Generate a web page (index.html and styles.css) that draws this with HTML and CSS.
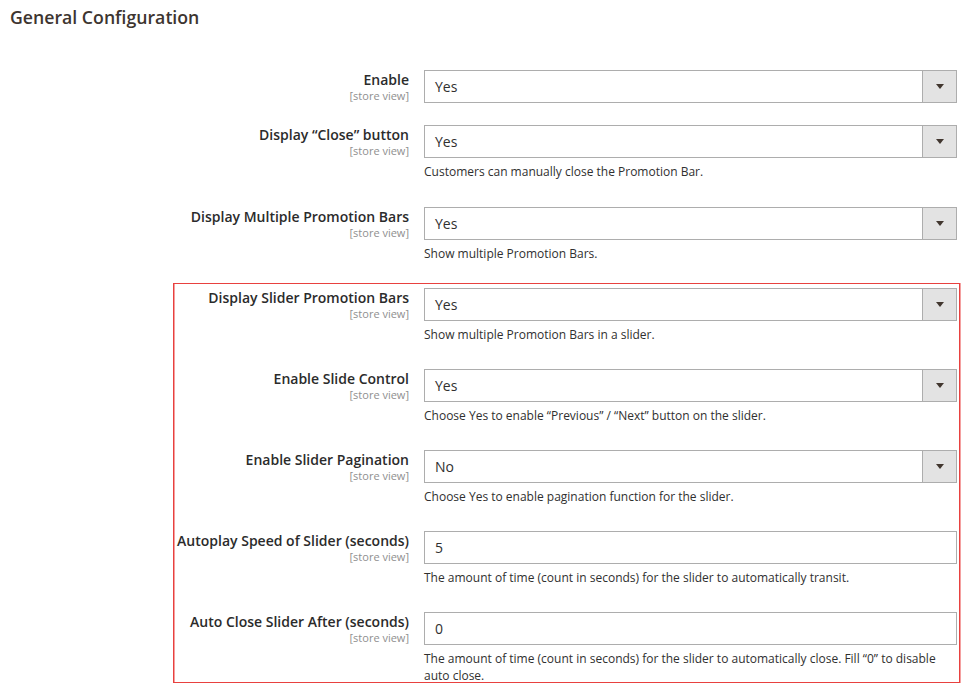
FILE: index.html
```html
<!DOCTYPE html>
<html lang="en">
<head>
<meta charset="utf-8">
<title>General Configuration</title>
<link rel="stylesheet" href="styles.css">
</head>
<body>
<div class="page">
  <h1 class="section-title">General Configuration</h1>

  <div class="fields">
    <div class="field">
      <div class="field-label"><span class="label-text">Enable</span><span class="scope">[store view]</span></div>
      <div class="field-control">
        <div class="select"><span class="select-value">Yes</span><span class="select-arrow"><i></i></span></div>
      </div>
    </div>

    <div class="field field-noted">
      <div class="field-label"><span class="label-text">Display “Close” button</span><span class="scope">[store view]</span></div>
      <div class="field-control">
        <div class="select"><span class="select-value">Yes</span><span class="select-arrow"><i></i></span></div>
        <p class="note">Customers can manually close the Promotion Bar.</p>
      </div>
    </div>

    <div class="field field-noted">
      <div class="field-label"><span class="label-text">Display Multiple Promotion Bars</span><span class="scope">[store view]</span></div>
      <div class="field-control">
        <div class="select"><span class="select-value">Yes</span><span class="select-arrow"><i></i></span></div>
        <p class="note">Show multiple Promotion Bars.</p>
      </div>
    </div>

    <div class="slider-group">
      <div class="field field-noted">
        <div class="field-label"><span class="label-text">Display Slider Promotion Bars</span><span class="scope">[store view]</span></div>
        <div class="field-control">
          <div class="select"><span class="select-value">Yes</span><span class="select-arrow"><i></i></span></div>
          <p class="note">Show multiple Promotion Bars in a slider.</p>
        </div>
      </div>

      <div class="field field-noted">
        <div class="field-label"><span class="label-text">Enable Slide Control</span><span class="scope">[store view]</span></div>
        <div class="field-control">
          <div class="select"><span class="select-value">Yes</span><span class="select-arrow"><i></i></span></div>
          <p class="note">Choose Yes to enable “Previous” / “Next” button on the slider.</p>
        </div>
      </div>

      <div class="field field-noted">
        <div class="field-label"><span class="label-text">Enable Slider Pagination</span><span class="scope">[store view]</span></div>
        <div class="field-control">
          <div class="select"><span class="select-value">No</span><span class="select-arrow"><i></i></span></div>
          <p class="note">Choose Yes to enable pagination function for the slider.</p>
        </div>
      </div>

      <div class="field field-noted">
        <div class="field-label"><span class="label-text">Autoplay Speed of Slider (seconds)</span><span class="scope">[store view]</span></div>
        <div class="field-control">
          <div class="text-input">5</div>
          <p class="note">The amount of time (count in seconds) for the slider to automatically transit.</p>
        </div>
      </div>

      <div class="field field-noted field-last">
        <div class="field-label"><span class="label-text">Auto Close Slider After (seconds)</span><span class="scope">[store view]</span></div>
        <div class="field-control">
          <div class="text-input">0</div>
          <p class="note">The amount of time (count in seconds) for the slider to automatically close. Fill “0” to disable auto close.</p>
        </div>
      </div>
    </div>
  </div>
</div>
</body>
</html>
```

FILE: styles.css
```css
html, body {
  margin: 0;
  padding: 0;
  background: #ffffff;
  overflow: hidden;
}

body {
  font-family: "Open Sans", "Noto Sans", sans-serif;
  color: #303030;
}

.page {
  padding: 0 6px 0 0;
}

.section-title {
  margin: 5px 0 0 10px;
  font-size: 17.7px;
  line-height: 24px;
  font-weight: 600;
  color: #3d3530;
}

.fields {
  margin-top: 41px;
  display: flex;
  flex-direction: column;
}

.field {
  display: grid;
  grid-template-columns: minmax(0, 1fr) 533px;
  column-gap: 15px;
  margin-bottom: 22px;
}

.field-noted {
  margin-bottom: 27px;
}

/* label column: text is right aligned and may spill to the left */
.field-label {
  display: flex;
  flex-direction: column;
  align-items: flex-end;
  padding-top: 1px;
  white-space: nowrap;
}

.label-text {
  font-size: 14px;
  line-height: 18px;
  font-weight: 600;
  color: #2b2b2b;
}

.scope {
  font-size: 11px;
  line-height: 13px;
  color: #8f8f8f;
}

.field-control {
  min-width: 0;
}

.select,
.text-input {
  box-sizing: border-box;
  height: 33px;
  border: 1px solid #adadad;
  background: #ffffff;
  font-size: 14px;
  color: #303030;
}

.select {
  display: flex;
  align-items: stretch;
}

.select-value {
  flex: 1;
  display: flex;
  align-items: center;
  padding-left: 10px;
}

.select-arrow {
  box-sizing: border-box;
  width: 34px;
  border-left: 1px solid #adadad;
  background: #e3e3e3;
  display: flex;
  align-items: center;
  justify-content: center;
}

.select-arrow i {
  display: block;
  width: 0;
  height: 0;
  border-left: 4px solid transparent;
  border-right: 4px solid transparent;
  border-top: 5px solid #41362f;
  margin-left: 1px;
}

.text-input {
  display: flex;
  align-items: center;
  padding-left: 10px;
}

.note {
  margin: 5px 0 0;
  font-size: 12px;
  line-height: 17px;
  color: #303030;
}

/* highlighted block around the slider settings */
.slider-group {
  box-sizing: border-box;
  height: 400px;
  margin: -6px -3px 0 173px;
  padding: 4px 2px 0 0;
  border: 1px solid #e8413f;
  box-shadow: inset 1px 0 0 #f4a0a0, 0 1px 0 #f4a0a0, 1px 0 0 #f4a0a0;
}

.slider-group .field-noted {
  margin-bottom: 26px;
}

.slider-group .field-last {
  margin-bottom: 0;
}
```
